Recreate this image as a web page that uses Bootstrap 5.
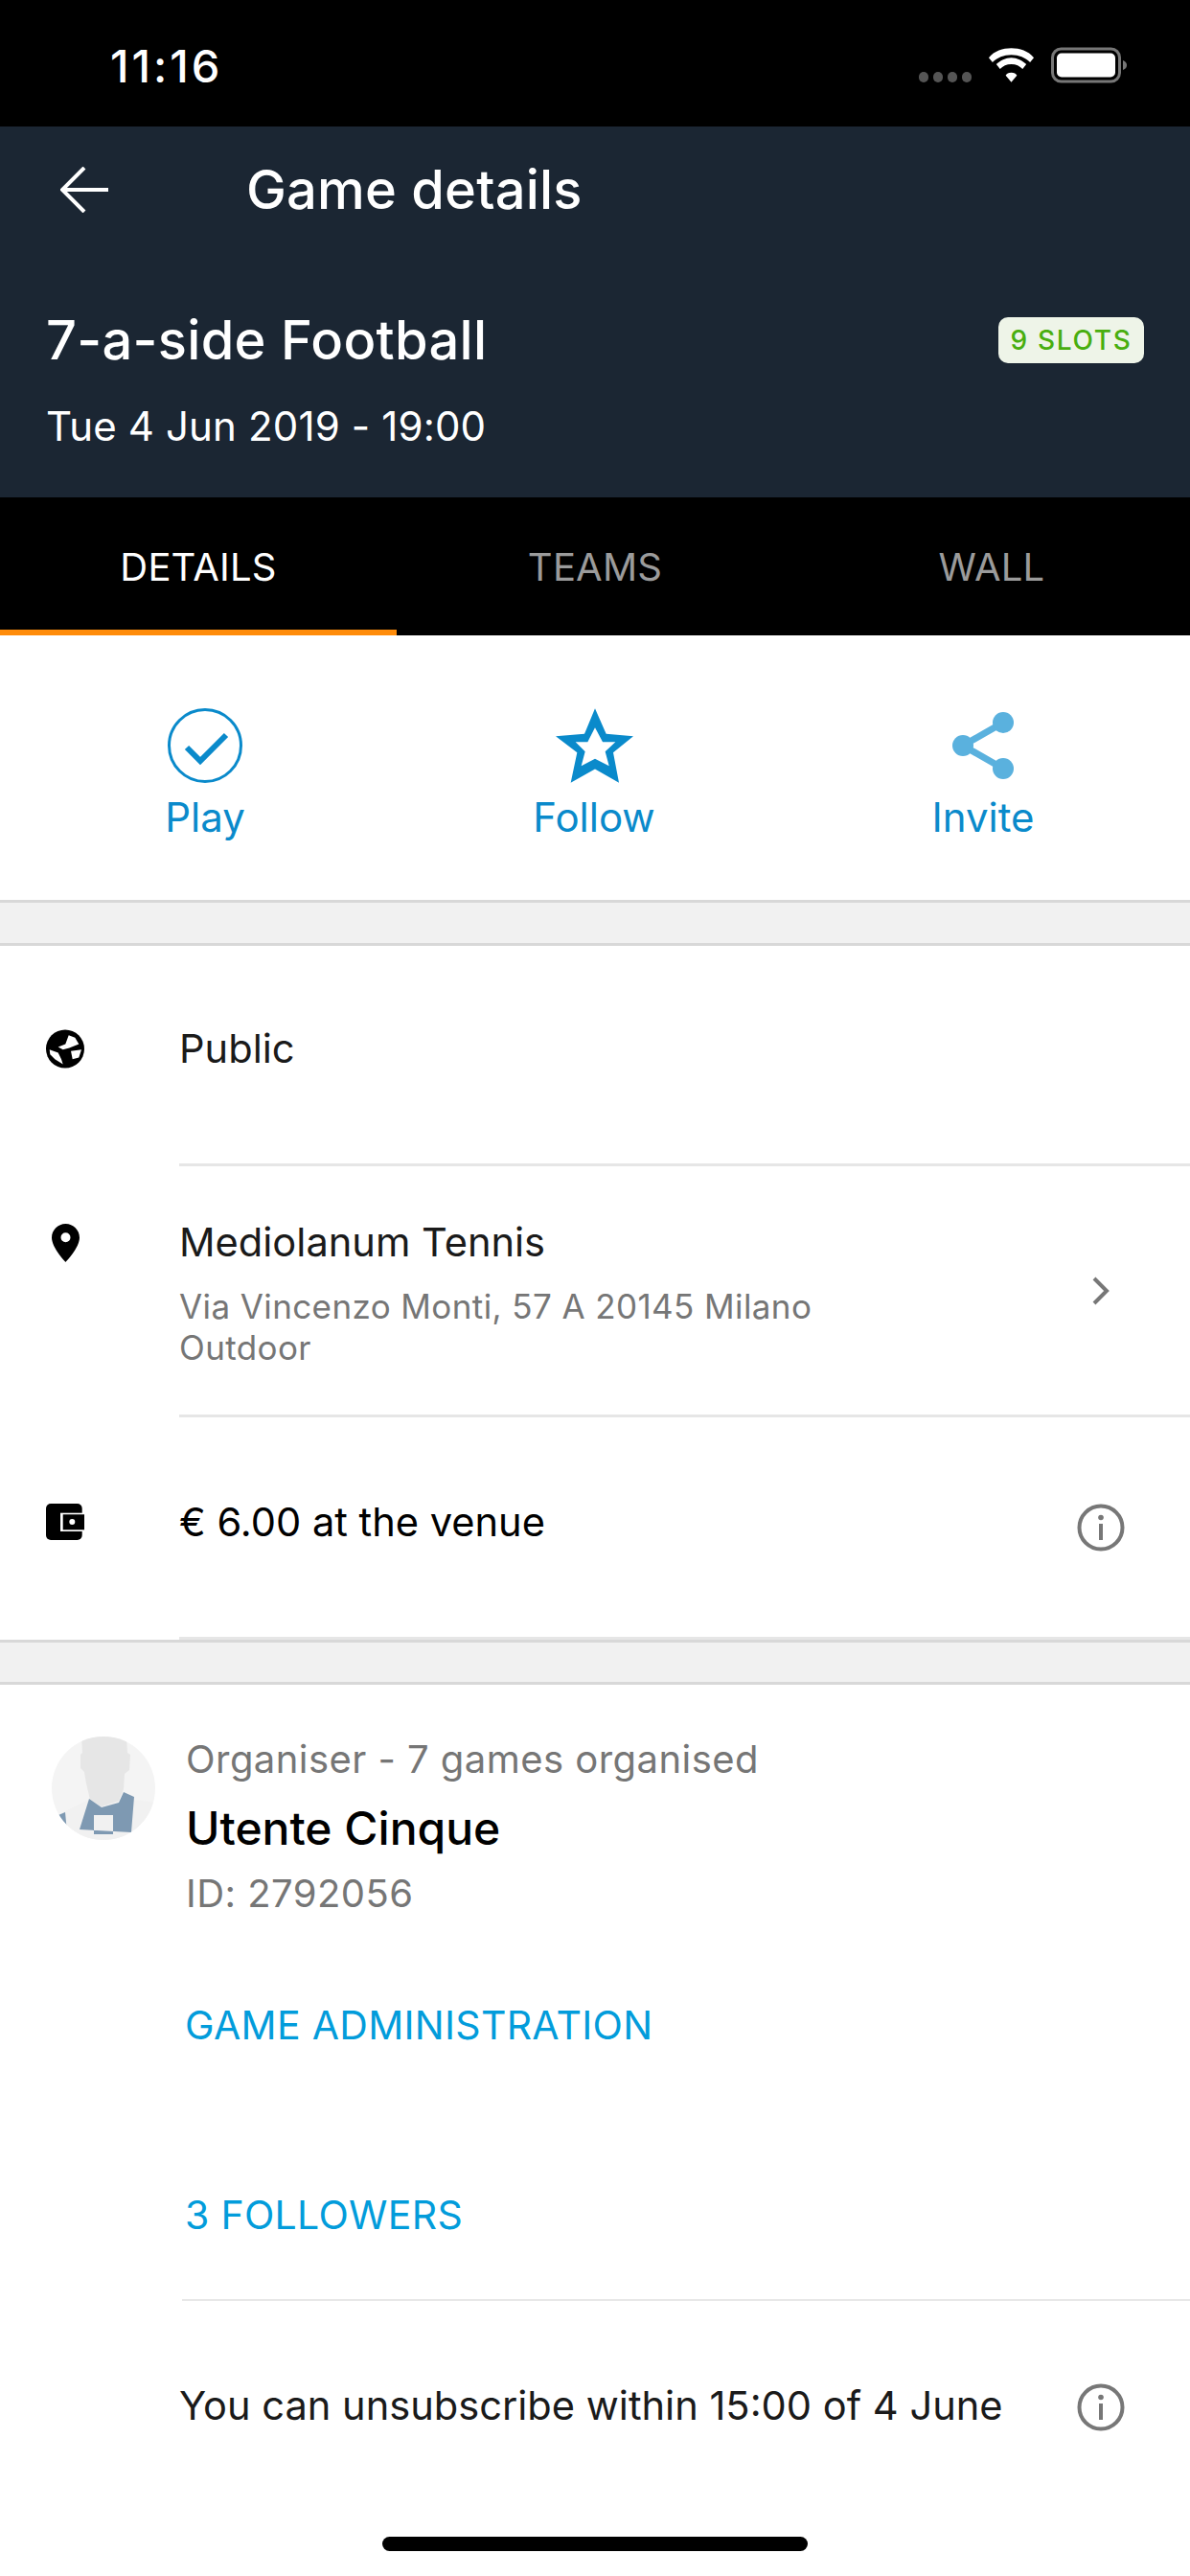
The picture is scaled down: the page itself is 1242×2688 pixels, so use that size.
<!doctype html>
<html lang="en"><head><meta charset="utf-8">
<link href="https://cdn.jsdelivr.net/npm/bootstrap@5.3.0/dist/css/bootstrap.min.css" rel="stylesheet">
<style>
html,body{margin:0;background:#fff;}
body{font-family:Inter,"Noto Sans",sans-serif;width:1242px;height:2688px;overflow:hidden;color:#1a1a1a;position:relative;}
.stbar{height:132px;background:#000;color:#fff;padding:4px 65px 0 115px;}
.clock{font-size:47px;font-weight:500;letter-spacing:3px;line-height:1;}
.sticons{display:flex;align-items:flex-end;gap:17px;}
.dots{display:flex;gap:5px;margin-bottom:1px;}
.dots i{width:10px;height:11px;border-radius:5px;background:#555;display:block;}
.hero{height:387px;background:#1b2633;color:#fff;padding:0 48px;}
.topline{height:132px;}
.backbtn{width:209px;}
.backbtn svg{margin-left:15px;display:block;}
.pagetitle{font-size:56px;font-weight:500;letter-spacing:.2px;}
.gamename{font-size:56px;font-weight:500;letter-spacing:.3px;line-height:68px;margin-top:57px;}
.slotpill{background:#eef4e8;color:#48ae0f;font-size:28px;letter-spacing:1.7px;border-radius:10px;width:152px;height:48px;line-height:48px;text-align:center;}
.gamedate{font-size:42px;line-height:50px;letter-spacing:.15px;margin-top:31px;}
.tabstrip{height:144px;background:#000;}
.tabcell{flex:1 1 0;text-align:center;font-size:40px;line-height:1;color:#9b9b9b;padding-top:53px;letter-spacing:.2px;}
.tabcell.onnow{color:#fff;border-bottom:6px solid #ff8c0a;}
.actions{height:276px;padding:76px 0 0 11px;color:#0a8acb;}
.actcell{width:406px;text-align:center;font-size:42px;line-height:48px;}
.acticon{height:78px;margin-bottom:12px;display:flex;justify-content:center;align-items:center;}
.gapband{background:#f1f1f1;border-top:3px solid #d8d8d8;border-bottom:3px solid #d8d8d8;}
.gapone{height:48px;}
.gaptwo{height:47px;}
.inforow{display:flex;}
.rowone{height:230px;}
.rowtwo{height:262px;}
.rowthree{height:232px;}
.rowicon{width:187px;flex:none;padding-left:48px;}
.rowicon svg{display:block;}
.rowbody{flex:1;min-width:0;border-bottom:3px solid #e6e6e6;display:flex;padding-right:68px;}
.rowtext{flex:1;}
.rowend{width:50px;flex:none;display:flex;justify-content:center;}
.rowmain{font-size:41.6px;line-height:48px;}
.rowsub{font-size:35px;line-height:43px;color:#767676;letter-spacing:.4px;}
.subgap{margin-top:22px;}
.pad83{padding-top:83px;}
.pad85{padding-top:85px;}
.pad55{padding-top:55px;}
.ico87{padding-top:87px;}
.ico60{padding-top:60px;}
.ico90{padding-top:90px;}
.chevpad{padding-top:115px;}
.infopad{padding-top:90px;}
.blackrow{color:#000;}
.orgblock{display:flex;padding:54px 0 0 46px;}
.avatarbox{width:148px;flex:none;}
.avatarbox svg{display:block;margin-top:-7px;}
.orggrey{font-size:40px;line-height:48px;color:#767676;letter-spacing:.45px;}
.orgname{font-size:48px;font-weight:500;line-height:56px;color:#000;margin:20px 0 16px;}
.linkish{font-size:41px;line-height:48px;color:#029cdb;letter-spacing:.3px;padding-left:193px;}
.linkone{margin-top:89px;}
.linktwo{margin-top:150px;}
.thinline{height:2px;background:#e8e8e8;margin:64px 0 0 190px;}
.lastrow{padding-top:85px;}
.lastrow .rowtext{padding-left:187px;}
.lastrow .rowbody{border:0;}
.lastinfo{padding-top:1px;}
.homebar{position:absolute;left:399px;top:2647px;width:444px;height:15px;border-radius:8px;background:#000;}
</style></head><body>
<div class="stbar d-flex align-items-center justify-content-between">
 <div class="clock">11:16</div>
 <div class="sticons">
  <div class="dots"><i></i><i></i><i></i><i></i></div>
  <svg width="49" height="38" viewBox="0 0 50 38"><path d="M25 8c-8 0-15 3-20 8l-4-5C7 4 16 1 25 1s18 3 24 10l-4 5C40 11 33 8 25 8zM25 18c-5 0-9 2-12 5l-4-5c4-4 10-7 16-7s12 3 16 7l-4 5c-3-3-7-5-12-5zM25 27c-3 0-5 1-6 3l6 7 6-7c-1-2-3-3-6-3z" fill="#fff"/></svg>
  <svg width="80" height="38" viewBox="0 0 80 38"><rect x="1.500" y="2" width="70" height="34" rx="9" fill="none" stroke="#777" stroke-width="3"/><rect x="6" y="6.500" width="61" height="25" rx="5" fill="#fff"/><path d="M75 14c3 1 4 3 4 5s-1 4-4 5z" fill="#777"/></svg>
 </div>
</div>
<div class="hero">
 <div class="topline d-flex align-items-center">
  <div class="backbtn"><svg width="50" height="48" viewBox="0 0 50 48"><path d="M50 24H2M25 1L2 24l23 23" fill="none" stroke="#fff" stroke-width="4"/></svg></div>
  <div class="pagetitle">Game details</div>
 </div>
 <div class="d-flex justify-content-between align-items-center gamename"><span>7-a-side Football</span><span class="slotpill">9 SLOTS</span></div>
 <div class="gamedate">Tue 4 Jun 2019 - 19:00</div>
</div>
<div class="tabstrip d-flex">
 <div class="tabcell onnow">DETAILS</div><div class="tabcell">TEAMS</div><div class="tabcell">WALL</div>
</div>
<div class="actions d-flex">
 <div class="actcell"><div class="acticon"><svg width="78" height="78" viewBox="0 0 78 78"><circle cx="39" cy="39" r="37.500" fill="none" stroke="#0a8acb" stroke-width="3"/><path d="M20 41l14 14 27-27" fill="none" stroke="#0a8acb" stroke-width="6" stroke-linejoin="miter"/></svg></div>Play</div>
 <div class="actcell"><div class="acticon"><svg width="81" height="78" viewBox="60 45 243 233"><path fill="#0a8acb" fill-rule="evenodd" d="M183 45L218 125 303 132 240 183 258 278 183 235 107 278 127 183 60 132 150 125zM183 105L160 150 122 150 152 180 140 225 183 203 227 225 215 180 247 150 207 150z"/></svg></div>Follow</div>
 <div class="actcell"><div class="acticon"><svg width="64" height="70" viewBox="0 0 64 70"><path d="M53 11L11 35l42 24" fill="none" stroke="#5ab1de" stroke-width="7"/><circle cx="53" cy="11" r="11" fill="#5ab1de"/><circle cx="11" cy="35" r="11" fill="#5ab1de"/><circle cx="53" cy="59" r="11" fill="#5ab1de"/></svg></div>Invite</div>
</div>
<div class="gapband gapone"></div>

<div class="inforow rowone">
 <div class="rowicon ico87"><svg width="40" height="41" viewBox="0 0 40 40"><circle cx="20" cy="20" r="20" fill="#000"/><path fill="#fff" d="M12.700 18L20.300 15 23.700 5.700 30.300 8.300 34.300 15 24.300 19 17.700 20.700zM3.700 20.700L12.700 24 16 30.700 17.700 36 9.300 30.700 4.300 25.700zM26 22.300L37 20.700 34.300 29 27.700 30.700z"/></svg></div>
 <div class="rowbody"><div class="rowtext pad83"><div class="rowmain">Public</div></div></div>
</div>
<div class="inforow rowtwo">
 <div class="rowicon ico60"><svg style="margin-left:6px" width="29" height="40" viewBox="0 0 29 40"><path fill="#000" fill-rule="evenodd" d="M14.500 0C6.500 0 0 6.500 0 14.500 0 25 14.500 40 14.500 40S29 25 29 14.500C29 6.500 22.500 0 14.500 0zM14.500 9.300a5 5 0 1 1 0 10 5 5 0 0 1 0-10z"/></svg></div>
 <div class="rowbody">
  <div class="rowtext pad55"><div class="rowmain">Mediolanum Tennis</div><div class="rowsub subgap">Via Vincenzo Monti, 57 A 20145 Milano<br>Outdoor</div></div>
  <div class="rowend chevpad"><svg width="18" height="30" viewBox="0 0 18 30"><path d="M2 2l13 13L2 28" fill="none" stroke="#777" stroke-width="4"/></svg></div>
 </div>
</div>
<div class="inforow rowthree">
 <div class="rowicon ico90"><svg width="40" height="38" viewBox="0 0 40 38"><rect width="37.700" height="38" rx="5" fill="#000"/><rect x="15" y="9.700" width="25" height="19.300" fill="#fff"/><rect x="17.700" y="11.300" width="22.300" height="16" fill="#000"/><circle cx="27.300" cy="19" r="3" fill="#fff"/></svg></div>
 <div class="rowbody">
  <div class="rowtext pad85"><div class="rowmain blackrow">€ 6.00 at the venue</div></div>
  <div class="rowend infopad"><svg width="50" height="50" viewBox="0 0 50 50"><circle cx="25" cy="25" r="22.500" fill="none" stroke="#777" stroke-width="4"/><circle cx="25" cy="14.500" r="2.800" fill="#777"/><rect x="23" y="21" width="4" height="17" fill="#777"/></svg></div>
 </div>
</div>
<div class="gapband gaptwo"></div>

<div class="orgblock">
 <div class="avatarbox"><svg width="120" height="120" viewBox="6 6 120 120"><defs><clipPath id="avclip"><circle cx="68" cy="67" r="54"/></clipPath></defs><circle cx="68" cy="67" r="59" fill="#fff"/><g clip-path="url(#avclip)"><rect x="0" y="0" width="140" height="130" fill="#f4f4f4"/><path d="M10 100L50 80 90 78 125 82V125H10z" fill="#f1f1f1"/><path fill="#e6e6e6" d="M45 13L92 13 93 30 96 32 95 48 90 52 89 68 84 80 66 86 54 79 50 62 48 50 44 46 44 32 46 30z"/><path fill="#7e99b2" fill-rule="evenodd" d="M53 78L43 110 97 113 100 76 89 71 84 82 66 87zM58 95H78V115H58z"/><path fill="#7e99b2" d="M21 95L28 92 30 113 25 107z"/></g></svg></div>
 <div>
  <div class="orggrey">Organiser - 7 games organised</div>
  <div class="orgname">Utente Cinque</div>
  <div class="orggrey">ID: 2792056</div>
 </div>
</div>
<div class="linkish linkone">GAME ADMINISTRATION</div>
<div class="linkish linktwo">3 FOLLOWERS</div>
<div class="thinline"></div>
<div class="inforow lastrow">
 <div class="rowbody">
  <div class="rowtext"><div class="rowmain">You can unsubscribe within 15:00 of 4 June</div></div>
  <div class="rowend lastinfo"><svg width="50" height="50" viewBox="0 0 50 50"><circle cx="25" cy="25" r="22.500" fill="none" stroke="#777" stroke-width="4"/><circle cx="25" cy="14.500" r="2.800" fill="#777"/><rect x="23" y="21" width="4" height="17" fill="#777"/></svg></div>
 </div>
</div>
<div class="homebar"></div>
</body></html>
